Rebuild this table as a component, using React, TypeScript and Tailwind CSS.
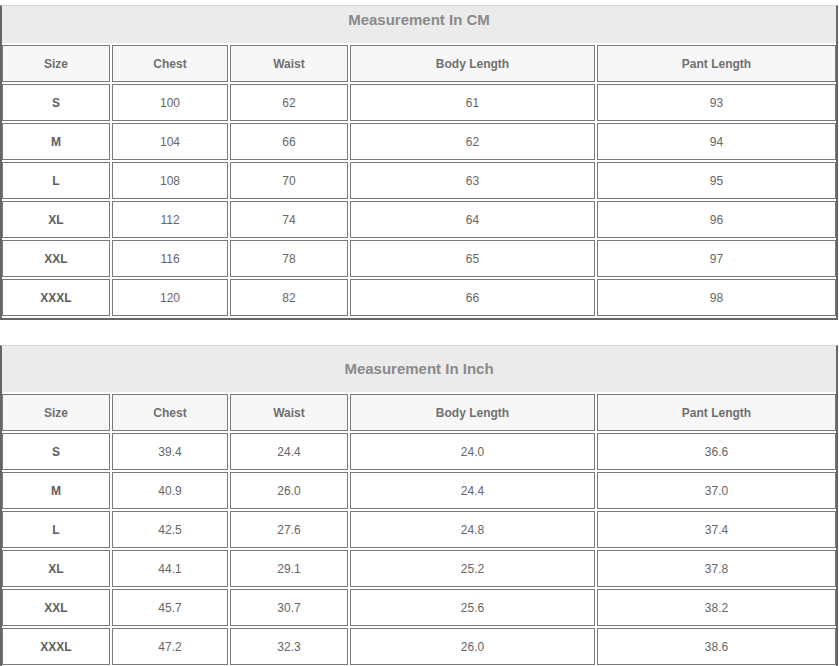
import React from "react";

type Row = [string, string, string, string, string];

const cm: Row[] = [
  ["S", "100", "62", "61", "93"],
  ["M", "104", "66", "62", "94"],
  ["L", "108", "70", "63", "95"],
  ["XL", "112", "74", "64", "96"],
  ["XXL", "116", "78", "65", "97"],
  ["XXXL", "120", "82", "66", "98"],
];

const inch: Row[] = [
  ["S", "39.4", "24.4", "24.0", "36.6"],
  ["M", "40.9", "26.0", "24.4", "37.0"],
  ["L", "42.5", "27.6", "24.8", "37.4"],
  ["XL", "44.1", "29.1", "25.2", "37.8"],
  ["XXL", "45.7", "30.7", "25.6", "38.2"],
  ["XXXL", "47.2", "32.3", "26.0", "38.6"],
];

const widths = ["w-[108px]", "w-[116px]", "w-[118px]", "w-[245px]", "flex-1"];
const headers = ["Size", "Chest", "Waist", "Body Length", "Pant Length"];

function RowView({ cells, header }: { cells: string[]; header?: boolean }) {
  return (
    <div className="flex gap-[2px]">
      {cells.map((c, i) => (
        <div
          key={i}
          className={`${widths[i]} h-[37px] border border-[#7a7a7a] flex items-center justify-center text-[12px] ${
            header
              ? "bg-[#f7f7f7] font-bold text-[#707070]"
              : i === 0
              ? "bg-white font-bold text-[#5e5e5e]"
              : "bg-white text-[#666]"
          }`}
        >
          {c}
        </div>
      ))}
    </div>
  );
}

function SizeTable({ title, rows, titleClass }: { title: string; rows: Row[]; titleClass: string }) {
  return (
    <div className="w-[838px] border-x-2 border-b-2 border-t border-[#666] border-t-[#d6d6d6] bg-white flex flex-col gap-[2px] pb-[2px]">
      <div className={`${titleClass} bg-[#ebebeb] flex justify-center text-[15px] font-bold text-[#8a8a8a]`}>
        {title}
      </div>
      <RowView cells={headers} header />
      {rows.map((r, i) => (
        <RowView key={i} cells={r} />
      ))}
    </div>
  );
}

export default function App() {
  return (
    <div className="w-[839px] h-[666px] overflow-hidden bg-white pt-[5px]" style={{ fontFamily: '"Liberation Sans", Arial, sans-serif' }}>
      <SizeTable title="Measurement In CM" rows={cm} titleClass="h-[37px] items-start pt-[3px]" />
      <div className="h-[25px]" />
      <SizeTable title="Measurement In Inch" rows={inch} titleClass="h-[46px] items-center" />
    </div>
  );
}
